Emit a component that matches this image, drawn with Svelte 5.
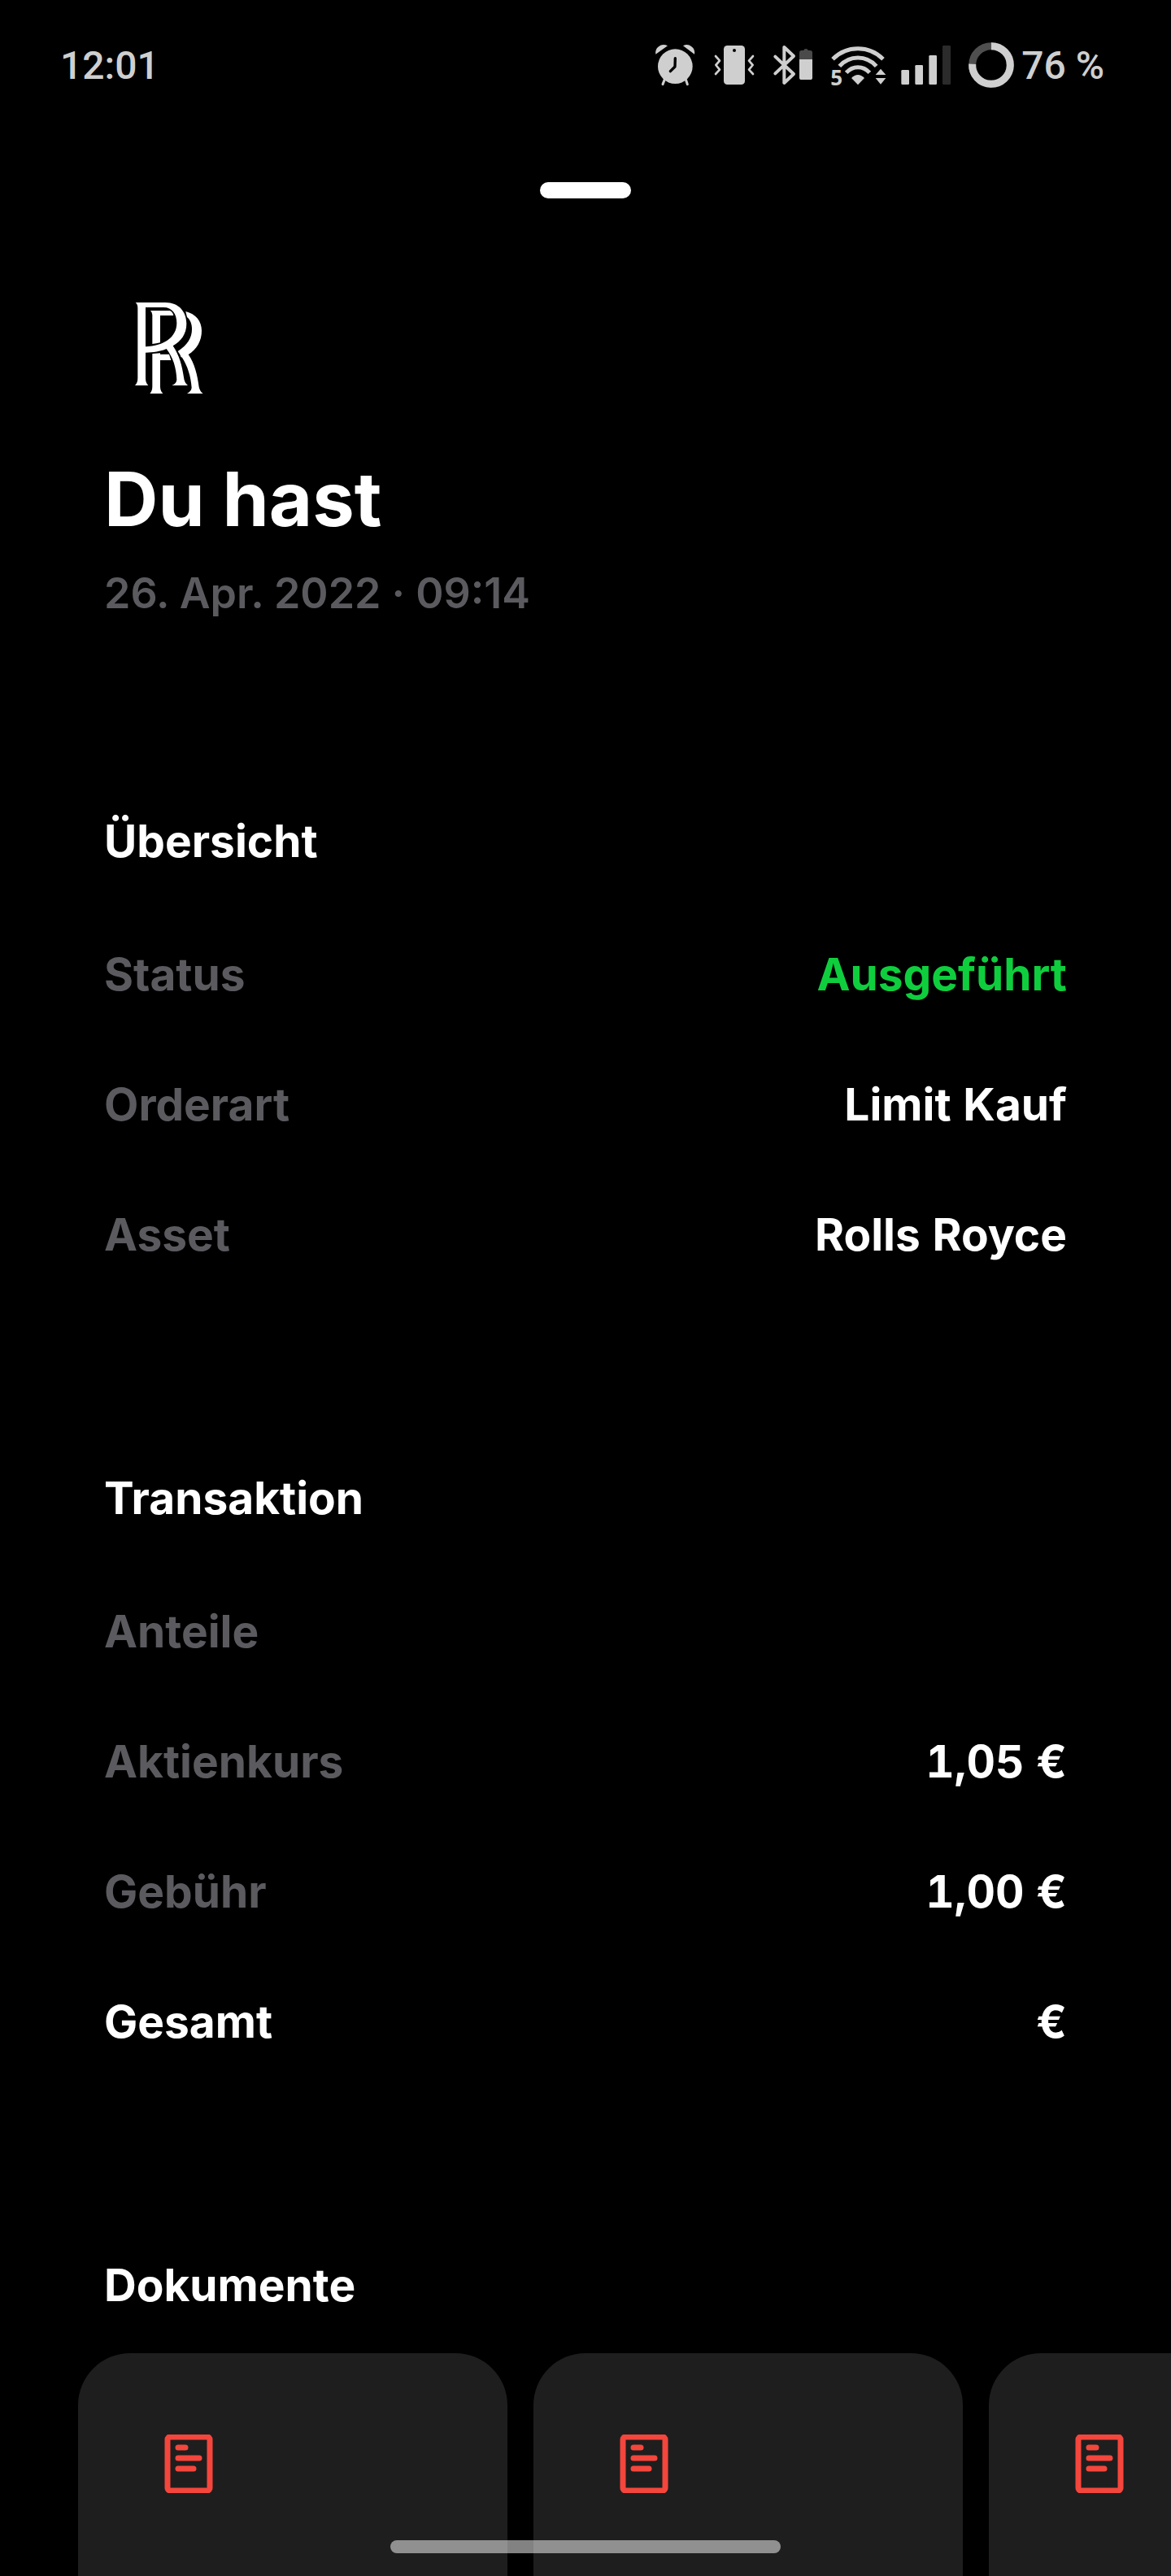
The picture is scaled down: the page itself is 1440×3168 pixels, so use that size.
<script lang="ts">
  type Row = { label: string; value: string; tone?: 'success' | 'total' }

  const sections: { title: string; rows: Row[] }[] = [
    {
      title: 'Übersicht',
      rows: [
        { label: 'Status', value: 'Ausgeführt', tone: 'success' },
        { label: 'Orderart', value: 'Limit Kauf' },
        { label: 'Asset', value: 'Rolls Royce' },
      ],
    },
    {
      title: 'Transaktion',
      rows: [
        { label: 'Anteile', value: '' },
        { label: 'Aktienkurs', value: '1,05 €' },
        { label: 'Gebühr', value: '1,00 €' },
        { label: 'Gesamt', value: '€', tone: 'total' },
      ],
    },
  ]

  const documents = [1, 2, 3]
</script>

<div class="screen">
  <header class="status-bar">
    <time>12:01</time>
    <div class="status-bar__icons">
      <!-- alarm -->
      <svg width="54" height="60" viewBox="63 60 162 180" fill="#cfcfcf">
        <circle cx="145" cy="155" r="64" />
        <path d="M73 110 Q70 92 84 82 Q98 70 117 79 Z M216 110 Q219 92 205 82 Q191 70 174 79 Z" />
        <path d="M106 203 L99 221 M184 203 L190 221" stroke="#cfcfcf" stroke-width="9" stroke-linecap="round" />
        <path d="M145 125 L144 156 L127 173" fill="none" stroke="#000" stroke-width="10" stroke-linecap="round" stroke-linejoin="round" />
      </svg>
      <!-- vibrate -->
      <svg width="55" height="60" viewBox="279 60 165 180">
        <rect x="324" y="78" width="78" height="144" rx="13" fill="#cfcfcf" />
        <circle cx="363" cy="96" r="6" fill="#000" />
        <path
          d="M294 117 L309 134 L295 150 L309 167 L294 183 M432 117 L417 134 L431 150 L417 167 L432 183"
          fill="none"
          stroke="#cfcfcf"
          stroke-width="8"
          stroke-linecap="round"
          stroke-linejoin="round"
        />
      </svg>
      <!-- bluetooth with device battery -->
      <svg width="54" height="60" viewBox="498 60 162 180">
        <path
          d="M514 119 L582 183 L547 216 V84 L582 117 L514 181"
          fill="none"
          stroke="#cfcfcf"
          stroke-width="12"
          stroke-linecap="round"
          stroke-linejoin="round"
        />
        <path d="M603 130 V104 Q603 96 611 96 H619 Q619 90 627 90 Q635 90 635 96 H643 Q651 96 651 104 V130 Z" fill="#4a4a4a" />
        <path d="M603 129 H651 V197 Q651 204 643 204 H611 Q603 204 603 197 Z" fill="#cfcfcf" />
      </svg>
      <!-- wifi -->
      <svg width="70" height="80" viewBox="714 30 210 240">
        <g fill="none" stroke="#cfcfcf" stroke-width="15">
          <path d="M726 128 Q765 89 819 89 Q873 89 912 128" />
          <path d="M751 154 Q779 123 819 123 Q859 123 887 154" />
          <path d="M776 178 Q794 158 819 158 Q844 158 862 178" />
        </g>
        <path d="M795 198 Q819 174 843 198 L819 223 Z" fill="#cfcfcf" />
        <path d="M884 186 L903 164 L922 186 Z M884 198 H922 L903 221 Z" fill="#cfcfcf" />
        <text class="wifi-label" x="718" y="224">5</text>
      </svg>
      <!-- signal -->
      <svg width="61" height="60" viewBox="978 60 183 180" fill="#cfcfcf">
        <rect x="979" y="168" width="29" height="54" rx="4" />
        <rect x="1030" y="150" width="29" height="72" rx="4" />
        <rect x="1081" y="114" width="29" height="108" rx="4" />
        <rect x="1131" y="78" width="30" height="144" rx="4" fill="#2b2b2b" />
      </svg>
      <div class="battery">
        <svg width="61" height="60" viewBox="315 60 183 180" fill="none" stroke-width="27">
          <circle cx="411" cy="150" r="70" stroke="#4f4f4f" />
          <path d="M411 80 A70 70 0 1 1 341 146" stroke="#cfcfcf" />
        </svg>
        <span>76 %</span>
      </div>
    </div>
  </header>

  <button class="handle" aria-label="Schließen"></button>

  <main>
    <div class="summary">
      <svg class="summary__logo" viewBox="-36 -6 480 480" fill="#fff" role="img" aria-label="Rolls Royce">
        <path
          fill-rule="evenodd"
          d="M80 66 H190 C240 66 268 100 268 145 C268 182 248 210 218 226 C242 262 252 300 258 342 Q260 362 273 372 H214 Q232 364 232 350 C230 305 218 268 194 237 C172 247 145 250 117 251 V345 Q117 363 127 372 H78 Q88 363 88 345 V86 Q88 72 80 66 Z M117 84 V229 C185 226 232 195 232 142 C232 108 215 84 184 84 Z"
        />
        <path d="M135 96 H206 Q217 100 220 114 H171 V214 Q157 218 142 219 V112 Q142 102 135 96 Z" />
        <path d="M142 255 L171 253 V257 H204 L211 279 H171 V376 Q171 393 181 402 H133 Q142 393 142 376 Z" />
        <path
          d="M265 99 C302 108 324 135 324 170 C324 208 306 238 275 258 C298 292 308 332 314 378 Q317 393 329 402 H270 Q286 393 287 380 C284 338 272 300 252 269 Q246 268 244 258 L236 246 C272 222 288 196 288 164 C288 146 282 130 270 120 Z"
        />
      </svg>
      <h1>Du hast</h1>
      <p>26. Apr. 2022 · 09:14</p>
    </div>

    {#each sections as section}
      <section>
        <h2>{section.title}</h2>
        <dl>
          {#each section.rows as row}
            <div class="row {row.tone ?? ''}">
              <dt>{row.label}</dt>
              <dd>{row.value}</dd>
            </div>
          {/each}
        </dl>
      </section>
    {/each}

    <section class="documents">
      <h2>Dokumente</h2>
      <div class="documents__list">
        {#each documents as id (id)}
          <button class="card" aria-label="Dokument {id}">
            <svg width="72" height="72" viewBox="0 0 72 72" fill="none" stroke="#f4463c">
              <rect x="10" y="3" width="52" height="66" rx="3" stroke-width="7" />
              <path d="M23 16 H32 M23 29 H49 M23 42 H42" stroke-width="7" stroke-linecap="round" />
            </svg>
          </button>
        {/each}
      </div>
    </section>
  </main>

  <div class="home-indicator"></div>
</div>

<style>
  :global(body) {
    background: #000;
  }

  .screen {
    display: flex;
    flex-direction: column;
    min-height: 100vh;
    overflow: hidden;
    background: #000;
    color: #fff;
    font-family: Inter, 'Liberation Sans', sans-serif;
  }

  .status-bar {
    display: flex;
    align-items: center;
    justify-content: space-between;
    height: 160px;
    padding: 0 82px 0 74px;
    color: #cfcfcf;
    font-family: Roboto, sans-serif;
    font-size: 48px;
    font-weight: 500;
  }

  .status-bar__icons {
    display: flex;
    align-items: center;
    gap: 18px;
  }

  .wifi-label {
    fill: #cfcfcf;
    font-family: 'Open Sans', sans-serif;
    font-size: 78px;
    font-weight: 700;
  }

  .battery {
    display: flex;
    align-items: center;
    gap: 8px;
  }

  .handle {
    align-self: center;
    width: 112px;
    height: 20px;
    margin: 64px 0 104px;
    padding: 0;
    border: none;
    border-radius: 10px;
    background: #fff;
  }

  main {
    display: flex;
    flex: 1;
    flex-direction: column;
  }

  .summary {
    margin-bottom: 224px;
    padding: 0 128px;
  }

  .summary__logo {
    display: block;
    width: 160px;
    height: 160px;
  }

  h1 {
    margin: 50px 0 20px;
    font-size: 92px;
    font-weight: 700;
    line-height: 112px;
  }

  p,
  h2,
  dl,
  dt,
  dd {
    margin: 0;
    font-size: 55px;
    line-height: 80px;
  }

  p {
    color: #5b5a5f;
    font-size: 52px;
    font-weight: 600;
  }

  section {
    margin-bottom: 244px;
    padding: 0 128px;
  }

  h2 {
    margin-bottom: 84px;
    font-weight: 700;
  }

  dl {
    display: flex;
    flex-direction: column;
    gap: 80px;
  }

  .row {
    display: flex;
    justify-content: space-between;
    min-height: 80px;
    font-weight: 700;
  }

  dt {
    color: #5b5a5f;
  }

  dd {
    font-variant-numeric: tabular-nums;
  }

  .success dd {
    color: #0fce3e;
  }

  .total dt {
    color: #fff;
  }

  .documents {
    display: flex;
    flex: 1;
    flex-direction: column;
    margin-bottom: 0;
  }

  .documents h2 {
    margin-bottom: 44px;
  }

  .documents__list {
    display: flex;
    flex: 1;
    gap: 32px;
    margin: 0 -128px 0 -32px;
    overflow: hidden;
  }

  .card {
    display: flex;
    flex: 0 0 528px;
    align-items: flex-start;
    min-height: 272px;
    padding: 100px;
    border: none;
    border-radius: 64px 64px 0 0;
    background: #1e1e1e;
  }

  .home-indicator {
    position: fixed;
    bottom: 28px;
    left: 50%;
    width: 480px;
    height: 16px;
    margin-left: -240px;
    border-radius: 8px;
    background: rgba(255, 255, 255, 0.51);
  }
</style>
